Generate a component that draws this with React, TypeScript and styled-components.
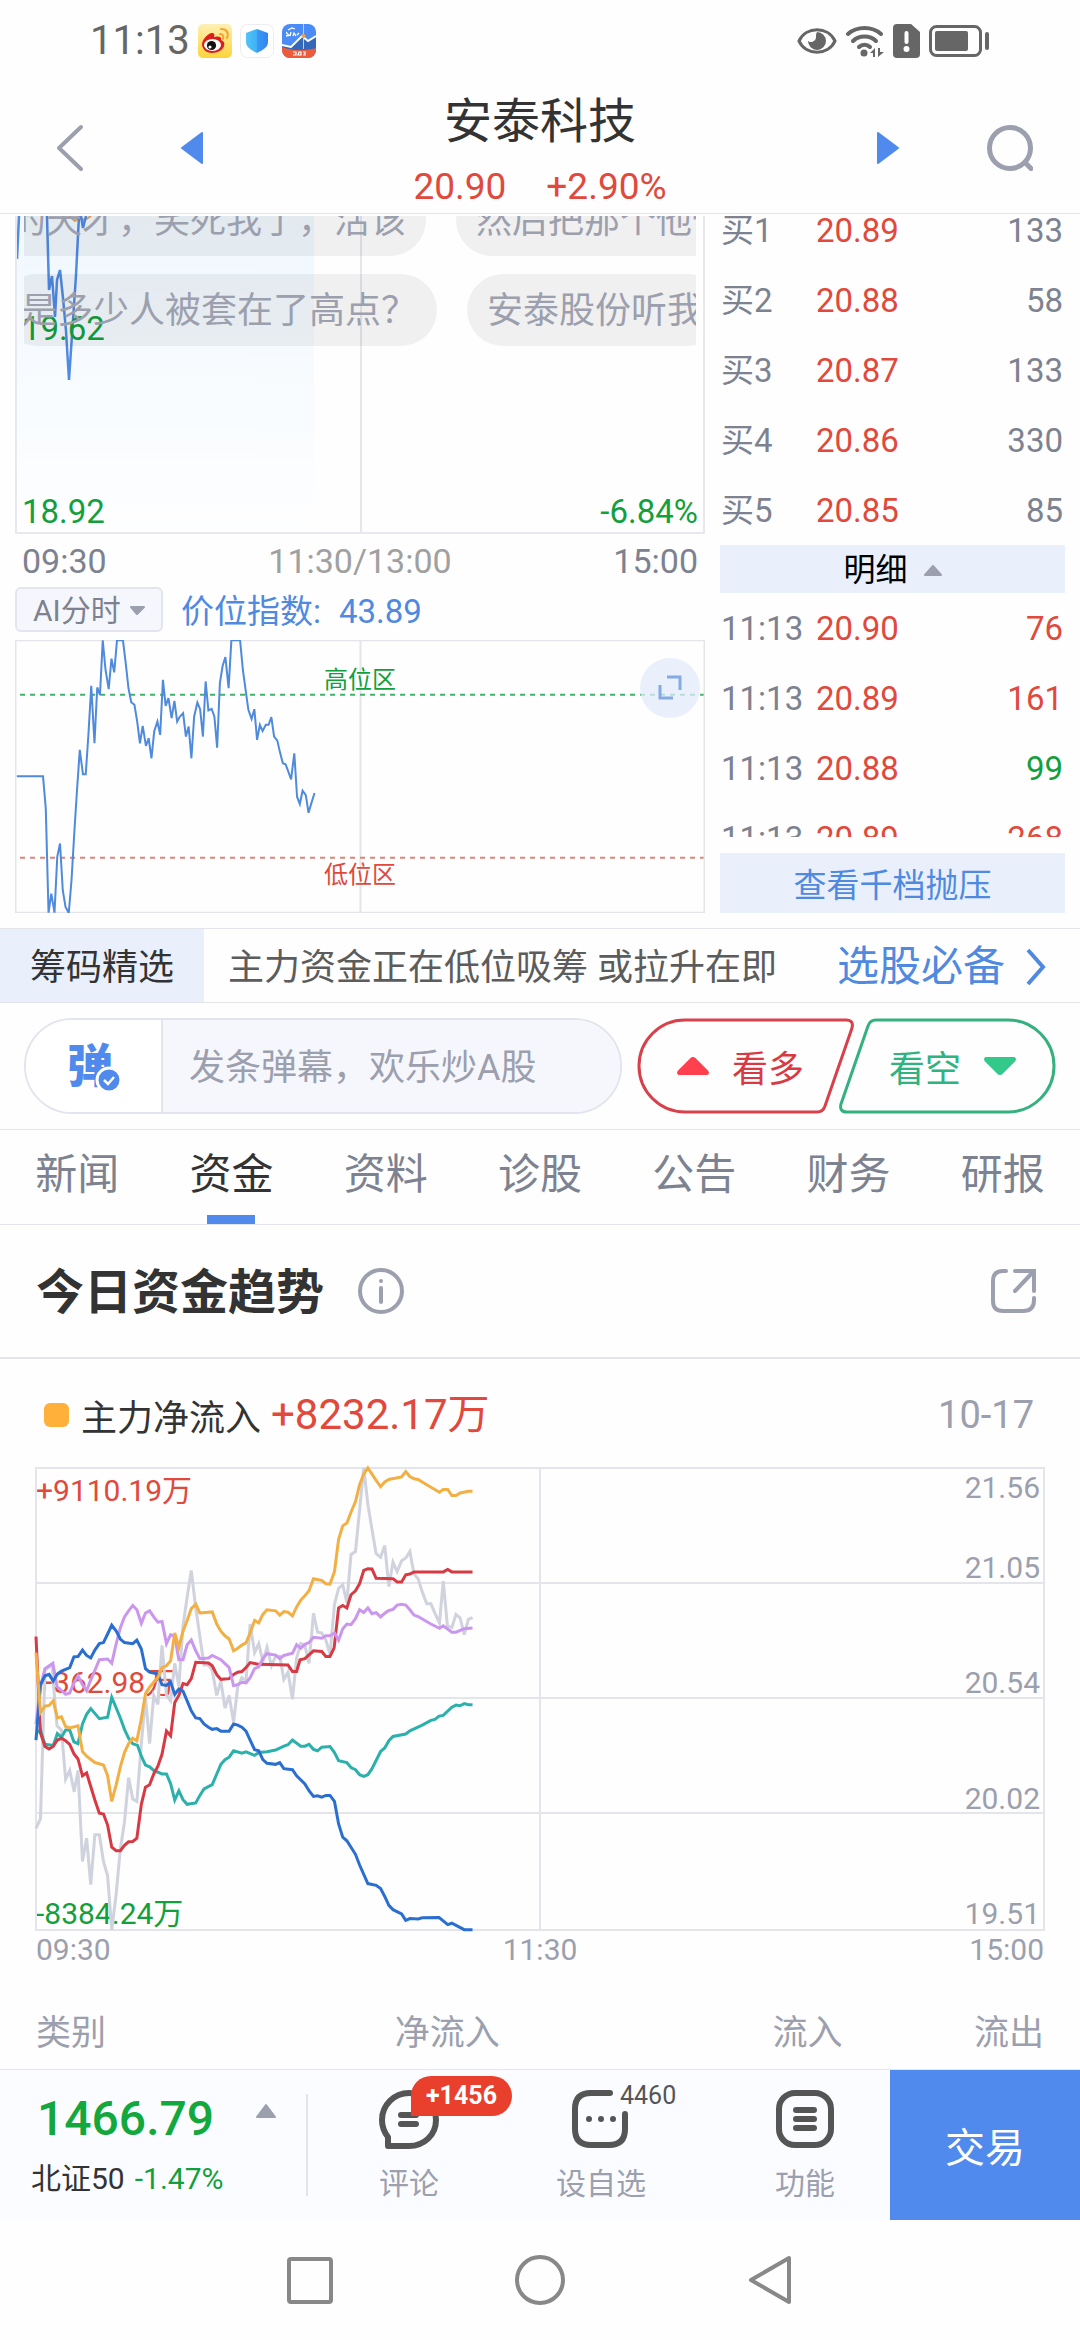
import React from 'react';
import styled, { createGlobalStyle } from 'styled-components';

const color = {
  red: '#e0493b',
  green: '#12a03c',
  blue: '#508aec',
  link: '#4f8ae0',
  ink: '#333333',
  slate: '#7d8290',
  mute: '#9c9fad',
  line: '#e4e5ea',
  pale: '#e9f0fc',
  tint: '#f6f7fc',
};

const GlobalStyle = createGlobalStyle`
  * { box-sizing: border-box; }
  body {
    margin: 0;
    background: #fefefe;
    color: ${color.ink};
    font-family: Roboto, "Noto Sans CJK SC", sans-serif;
    font-size: 36px;
  }
  button, input {
    margin: 0;
    padding: 0;
    border: 0;
    background: none;
    color: inherit;
    font: inherit;
  }
  button { cursor: pointer; }
  svg { display: block; flex: none; }
  h1, h2, p { margin: 0; }
`;

/* ---------- status bar ---------- */

const StatusBar = styled.div`
  display: flex;
  justify-content: space-between;
  align-items: center;
  height: 84px;
  padding: 0 90px 2px;
`;

const StatusGroup = styled.div<{ $gap: number }>`
  display: flex;
  align-items: center;
  gap: ${(p) => p.$gap}px;
`;

const Clock = styled.span`
  color: #666;
  font-size: 40px;
  line-height: 48px;
`;

/* ---------- header ---------- */

const Header = styled.header`
  display: grid;
  grid-template-columns: 140px 104px 1fr 104px 140px;
  align-items: center;
  height: 130px;
  margin-bottom: 2px;
  padding-bottom: 2px;
  border-bottom: 1px solid ${color.line};
`;

const IconButton = styled.button`
  display: flex;
  align-items: center;
  justify-content: center;
  height: 100%;
`;

const StockHead = styled.div`
  display: flex;
  flex-direction: column;
  align-items: center;
  gap: 11px;
  padding-top: 8px;
`;

const StockName = styled.h1`
  font-size: 48px;
  font-weight: 400;
  line-height: 60px;
`;

const StockQuote = styled.p`
  display: flex;
  gap: 40px;
  color: ${color.red};
  font-size: 37px;
  line-height: 48px;
`;

/* ---------- quote area ---------- */

const QuoteArea = styled.section`
  display: grid;
  grid-template-columns: 2fr 1fr;
  column-gap: 15px;
  padding: 0 15px 15px;
`;

const PriceChart = styled.div`
  position: relative;
  display: flex;
  flex-direction: column;
  justify-content: flex-end;
  height: 318px;
  border: 2px solid #e8e9ee;
  border-top: 0;
  overflow: hidden;
`;

const PlotLayer = styled.svg`
  position: absolute;
  inset: 0;
  width: 100%;
  height: 100%;
`;

const PriceLabels = styled.div`
  position: relative;
  display: flex;
  flex-direction: column;
  gap: 143px;
  padding: 0 5px;
  color: ${color.green};
  font-size: 33px;
  line-height: 40px;
`;

const LabelRow = styled.div`
  display: flex;
  justify-content: space-between;
`;

const Barrage = styled.div`
  position: absolute;
  top: -32px;
  left: 7px;
  right: 7px;
  display: flex;
  flex-direction: column;
  gap: 18px;
  overflow: hidden;
`;

const BarrageLane = styled.div<{ $scrolled: number }>`
  display: flex;
  gap: 30px;
  margin-left: -${(p) => p.$scrolled}px;
`;

const BarragePill = styled.span`
  flex: none;
  padding: 3px 20px 0;
  border-radius: 36px;
  background: rgba(0, 0, 0, 0.055);
  color: ${color.mute};
  font-size: 36px;
  line-height: 69px;
  white-space: nowrap;
`;

const TimeAxis = styled.div`
  display: flex;
  justify-content: space-between;
  align-items: center;
  height: 53px;
  padding: 0 7px;
  color: ${color.slate};
  font-size: 34px;
`;

const MidTime = styled.span`
  color: #a0a0a0;
`;

const IndicatorRow = styled.div`
  display: flex;
  align-items: center;
  gap: 18px;
  height: 45px;
  margin-bottom: 8px;
  color: ${color.link};
  font-size: 33px;
  line-height: 45px;
`;

const IndicatorPick = styled.button`
  display: flex;
  align-items: center;
  justify-content: space-between;
  width: 148px;
  height: 45px;
  padding: 2px 16px 0;
  border: 2px solid #e3e5ee;
  border-radius: 6px;
  background: ${color.tint};
  color: ${color.slate};
  font-size: 30px;
  line-height: 40px;
`;

const IndicatorText = styled.span`
  padding-top: 4px;
`;

const IndexChart = styled.div`
  position: relative;
  display: flex;
  flex-direction: column;
  justify-content: space-between;
  align-items: center;
  height: 273px;
  padding: 22px 0 20px;
`;

const ZoneLabel = styled.span<{ $tone: string }>`
  position: relative;
  color: ${(p) => p.$tone};
  font-size: 24px;
  line-height: 36px;
`;

const ExpandButton = styled.button`
  position: absolute;
  top: 18px;
  right: 5px;
  display: flex;
  align-items: center;
  justify-content: center;
  width: 60px;
  height: 60px;
  border-radius: 50%;
  background: rgba(226, 235, 251, 0.75);
`;

const OrderBook = styled.div`
  display: flex;
  flex-direction: column;
`;

const BidList = styled.div`
  display: flex;
  flex-direction: column;
  justify-content: flex-end;
  height: 329px;
  overflow: hidden;
`;

const TradeList = styled.div`
  height: 244px;
  margin-bottom: 16px;
  overflow: hidden;
`;

const BookRow = styled.div`
  display: grid;
  grid-template-columns: 95px 1fr auto;
  flex: none;
  height: 70px;
  padding: 2px 2px 0 1px;
  color: ${color.slate};
  font-size: 33px;
  line-height: 68px;
`;

const Figure = styled.span<{ $tone?: string }>`
  color: ${(p) => p.$tone ?? 'inherit'};
`;

const DetailToggle = styled.button`
  display: flex;
  align-items: center;
  justify-content: center;
  gap: 16px;
  height: 48px;
  padding-top: 2px;
  background: ${color.pale};
  color: #000;
  font-size: 32px;
  line-height: 46px;
`;

const DepthButton = styled.button`
  height: 60px;
  background: ${color.pale};
  color: ${color.link};
  font-size: 33px;
`;

/* ---------- promo ---------- */

const Promo = styled.a`
  display: flex;
  align-items: center;
  height: 75px;
  border-top: 1px solid ${color.line};
  border-bottom: 1px solid ${color.line};
  color: #5c5c5c;
  font-size: 36px;
  line-height: 68px;
  text-decoration: none;
`;

const PromoTag = styled.span`
  padding: 5px 30px 0;
  background: ${color.pale};
  color: ${color.ink};
`;

const PromoText = styled.span`
  flex: 1;
  padding: 5px 0 0 24px;
  white-space: pre;
`;

const PromoMore = styled.span`
  display: flex;
  align-items: center;
  gap: 20px;
  padding: 2px 33px 0 0;
  color: ${color.link};
  font-size: 42px;
`;

/* ---------- comment and vote ---------- */

const VoteBar = styled.section`
  display: flex;
  align-items: center;
  height: 127px;
  padding: 0 24px;
  border-bottom: 1px solid ${color.line};
`;

const CommentBox = styled.label`
  display: flex;
  flex: 1;
  min-width: 0;
  height: 96px;
  margin-right: 15px;
  border: 2px solid #e3e5ee;
  border-radius: 48px;
  overflow: hidden;
`;

const CommentBadge = styled.span`
  position: relative;
  width: 137px;
  padding-left: 41px;
  border-right: 2px solid #e3e5ee;
  background: #fff;
  color: ${color.blue};
  font-size: 46px;
  font-weight: 900;
  line-height: 92px;
`;

const CommentTick = styled.svg`
  position: absolute;
  left: 69px;
  top: 46px;
`;

const CommentInput = styled.input`
  flex: 1;
  min-width: 0;
  padding: 4px 26px 0;
  background: ${color.tint};
  outline: 0;
  &::placeholder { color: ${color.mute}; opacity: 1; }
`;

const VoteButton = styled.button<{ $tone: string; $overlap?: boolean }>`
  position: relative;
  display: flex;
  align-items: center;
  justify-content: center;
  gap: 22px;
  width: 218px;
  height: 96px;
  margin-left: ${(p) => (p.$overlap ? -17 : 0)}px;
  padding: ${(p) => (p.$overlap ? '0 0 0 12px' : '0 12px 0 0')};
  color: ${(p) => p.$tone};
  font-size: 36px;
`;

/* ---------- tabs ---------- */

const Tabs = styled.nav`
  display: flex;
  height: 95px;
  border-bottom: 1px solid ${color.line};
`;

const Tab = styled.button<{ $active: boolean }>`
  display: flex;
  flex: 1;
  flex-direction: column;
  align-items: center;
  justify-content: space-between;
  padding-top: 5px;
  color: ${(p) => (p.$active ? color.ink : color.slate)};
  font-size: 42px;
  line-height: 80px;
  &::after {
    content: '';
    width: 48px;
    height: 9px;
    background: ${(p) => (p.$active ? color.blue : 'transparent')};
  }
`;

/* ---------- fund trend ---------- */

const TrendHead = styled.div`
  display: flex;
  align-items: center;
  height: 134px;
  padding: 0 43px 0 36px;
  border-bottom: 2px solid ${color.line};
`;

const TrendTitle = styled.h2`
  margin-right: 34px;
  padding-top: 3px;
  font-size: 48px;
  font-weight: 700;
  line-height: 64px;
`;

const PlainButton = styled.button`
  display: flex;
`;

const Spacer = styled.span`
  flex: 1;
`;

const Legend = styled.div`
  display: flex;
  align-items: center;
  height: 109px;
  padding: 2px 46px 0 44px;
`;

const Swatch = styled.span`
  width: 25px;
  height: 24px;
  margin-right: 12px;
  border-radius: 6px;
  background: #ffb03a;
`;

const LegendValue = styled.span`
  flex: 1;
  margin-left: 10px;
  color: ${color.red};
  font-size: 42px;
  line-height: 56px;
`;

const LegendDate = styled.time`
  color: ${color.mute};
  font-size: 38px;
`;

const TrendBody = styled.div`
  padding: 0 36px;
`;

const TrendChart = styled.div`
  position: relative;
  height: 462px;
`;

const TrendLabels = styled.div`
  display: grid;
  grid-template-columns: 1fr 1fr;
  grid-template-rows: repeat(4, 1fr);
  height: 100%;
  font-size: 30px;
  line-height: 32px;
`;

const FlowLabel = styled.span<{ $tone: string; $top?: boolean }>`
  align-self: ${(p) => (p.$top ? 'start' : 'end')};
  padding-top: ${(p) => (p.$top ? 7 : 0)}px;
  color: ${(p) => p.$tone};
`;

const PriceTicks = styled.div`
  display: flex;
  flex-direction: column;
  justify-content: space-between;
  grid-column: 2;
  padding: 4px 4px 0 0;
  color: ${color.mute};
  text-align: right;
`;

const TrendAxis = styled.div`
  display: flex;
  justify-content: space-between;
  color: ${color.mute};
  font-size: 30px;
  line-height: 40px;
`;

const FlowTable = styled.table`
  width: 100%;
  margin-top: 25px;
  border-collapse: collapse;
  table-layout: fixed;
`;

const FlowHead = styled.th<{ $share: number }>`
  width: ${(p) => p.$share}%;
  height: 74px;
  padding: 0 0 5px;
  color: ${color.mute};
  font-size: 35px;
  font-weight: 400;
  text-align: right;
  &:first-child { text-align: left; }
`;

/* ---------- bottom bar ---------- */

const BottomBar = styled.footer`
  display: flex;
  height: 151px;
  border-top: 1px solid ${color.line};
  background: #fbfcff;
`;

const IndexPanel = styled.button`
  display: grid;
  grid-template-columns: 1fr auto;
  align-content: center;
  align-items: start;
  row-gap: 12px;
  width: 308px;
  margin: 24px 0;
  padding: 0 30px 0 31px;
  border-right: 2px solid #e3e4ea;
  text-align: left;
`;

const IndexValue = styled.span`
  padding-left: 6px;
  color: #12a83e;
  font-size: 48px;
  font-weight: 500;
  line-height: 56px;
`;

const IndexMark = styled.span`
  padding-top: 12px;
`;

const IndexName = styled.span`
  display: flex;
  grid-column: 1 / 3;
  gap: 10px;
  font-size: 30px;
  line-height: 40px;
`;

const ActionRow = styled.div`
  display: grid;
  grid-template-columns: 202px 182px 1fr;
  flex: 1;
`;

const Action = styled.button`
  position: relative;
  display: flex;
  flex-direction: column;
  align-items: center;
  justify-content: center;
  gap: 15px;
  padding-top: 2px;
  color: ${color.mute};
  font-size: 30px;
  line-height: 40px;
  &:last-child { padding-left: 28px; }
`;

const NewBadge = styled.span`
  position: absolute;
  top: 6px;
  left: 103px;
  height: 40px;
  padding: 0 15px;
  border-radius: 20px 20px 20px 0;
  background: #e93f2d;
  color: #fff;
  font-size: 25px;
  font-weight: 700;
  line-height: 40px;
`;

const Count = styled.span`
  position: absolute;
  top: 8px;
  left: 110px;
  color: #555;
  font-size: 25px;
  line-height: 36px;
`;

const TradeButton = styled.button`
  width: 190px;
  background: ${color.blue};
  color: #fff;
  font-size: 40px;
`;

const SystemNav = styled.nav`
  display: flex;
  align-items: center;
  justify-content: center;
  gap: 180px;
  height: 120px;
`;

/* ---------- data ---------- */

const BIDS = [
  { level: '买1', price: '20.89', volume: '133' },
  { level: '买2', price: '20.88', volume: '58' },
  { level: '买3', price: '20.87', volume: '133' },
  { level: '买4', price: '20.86', volume: '330' },
  { level: '买5', price: '20.85', volume: '85' },
];

const TRADES = [
  { time: '11:13', price: '20.90', volume: '76', tone: color.red },
  { time: '11:13', price: '20.89', volume: '161', tone: color.red },
  { time: '11:13', price: '20.88', volume: '99', tone: color.green },
  { time: '11:13', price: '20.89', volume: '268', tone: color.red },
];

const TABS = ['新闻', '资金', '资料', '诊股', '公告', '财务', '研报'];

const INDEX_LINE =
  '37,469 94,469 100,565 106,877 112,820 119,877 125,710 131,670 137,810 143,860 150,878 156,780 162,640 168,510 174,390 181,463 187,463 193,340 199,198 206,370 212,203 218,225 224,62 230,150 237,208 243,117 249,158 255,62 268,62 274,130 280,205 286,247 293,255 299,305 305,370 311,318 318,378 324,355 330,415 336,335 343,305 349,345 355,180 361,258 367,235 374,295 380,243 386,305 392,290 399,280 405,350 411,320 417,415 423,290 430,248 436,268 442,350 448,185 454,272 461,267 467,290 473,383 479,190 485,138 491,112 498,205 504,62 523,62 529,150 535,210 541,270 548,297 554,268 560,360 566,315 572,333 579,315 585,315 591,292 597,350 604,362 610,398 616,430 622,433 628,455 634,478 641,400 647,530 653,552 659,512 666,525 672,578 678,550 685,519';

const FLOW_LINES = [
  {
    stroke: '#d0d2de',
    points:
      '104,1087 117,1060 130,645 150,628 165,800 178,812 190,950 202,925 215,985 226,925 239,1180 251,1115 263,1245 275,1105 288,1105 300,1180 312,1220 324,1372 337,1270 349,1145 361,1070 373,945 385,1005 397,1012 410,850 422,720 434,850 446,715 458,740 470,575 483,715 495,730 507,625 519,690 531,520 543,440 555,365 568,470 580,550 592,630 605,630 616,645 629,715 641,675 653,750 665,715 678,790 690,690 702,665 714,675 726,515 739,595 751,570 763,620 775,580 788,632 800,605 812,605 824,670 836,650 849,725 861,610 873,570 885,575 897,625 910,485 922,538 934,540 946,560 958,600 971,460 983,415 995,405 1007,455 1019,320 1032,312 1044,195 1056,78 1068,180 1080,250 1092,318 1105,328 1117,295 1129,410 1141,342 1153,368 1166,338 1178,330 1190,312 1202,375 1214,388 1226,425 1239,458 1251,458 1263,485 1276,512 1287,395 1299,520 1312,525 1324,488 1336,498 1348,545 1360,502 1372,497',
  },
  {
    stroke: '#2bb0ac',
    points:
      '106,820 117,812 124,835 130,852 154,855 166,822 178,832 190,812 202,812 214,845 226,850 239,795 251,768 263,752 288,780 312,776 324,720 349,778 361,810 373,835 385,850 399,855 410,885 422,910 434,915 446,925 470,935 483,935 495,962 507,1008 519,982 531,1007 543,1020 568,1016 580,995 592,977 616,965 629,935 641,908 653,895 665,888 678,870 702,877 714,873 739,883 751,875 775,873 800,868 824,857 836,853 849,840 873,857 885,857 897,852 910,866 922,870 934,860 958,858 971,875 983,898 1007,903 1019,917 1032,923 1044,937 1056,942 1068,937 1080,920 1105,872 1117,862 1129,842 1141,830 1178,823 1190,814 1226,798 1251,785 1263,782 1275,773 1287,771 1312,748 1324,742 1336,744 1348,738 1360,741 1372,741',
  },
  {
    stroke: '#d83a44',
    points:
      '104,550 117,820 130,858 142,865 154,858 166,840 178,835 190,842 202,852 214,878 226,893 239,940 251,932 263,970 275,1008 288,1045 300,1047 312,1078 324,1140 337,1150 349,1150 361,1135 373,1125 385,1124 397,1115 410,1020 422,972 434,965 446,935 458,913 470,880 483,815 495,828 507,735 519,715 531,682 543,685 555,668 568,622 605,624 616,632 629,657 641,670 665,668 678,656 690,650 702,648 714,637 726,623 751,628 836,630 849,648 861,648 871,615 885,612 910,590 934,592 946,606 958,606 970,582 983,470 995,463 1007,470 1019,433 1032,422 1044,402 1056,365 1068,360 1080,361 1092,387 1141,388 1153,397 1166,397 1178,377 1190,375 1202,369 1287,369 1300,362 1312,369 1372,369',
  },
  {
    stroke: '#cb97ee',
    points:
      '104,795 117,690 130,640 153,625 165,690 190,712 202,708 214,680 226,660 239,685 251,702 263,672 275,645 288,615 312,613 324,625 337,570 349,525 361,495 373,478 385,463 397,475 410,513 422,484 434,478 446,495 458,510 470,508 483,570 495,545 507,550 519,615 531,615 543,573 555,560 568,590 580,612 605,610 616,603 641,615 665,637 678,688 690,685 702,678 714,680 726,665 739,640 751,635 763,612 775,598 800,602 812,612 824,603 849,597 861,573 873,583 885,572 897,567 910,552 934,555 946,548 958,548 971,540 983,560 995,528 1007,515 1019,517 1032,500 1044,475 1056,483 1068,470 1080,486 1092,483 1105,495 1117,485 1129,477 1141,474 1153,462 1166,460 1178,462 1190,475 1202,490 1214,494 1251,515 1276,527 1287,520 1312,538 1324,538 1348,528 1372,526',
  },
  {
    stroke: '#2a6fd0',
    points:
      '104,840 117,685 130,660 142,656 154,675 166,655 178,647 202,637 214,607 226,606 239,588 251,603 263,610 275,588 288,570 300,567 312,543 324,518 337,535 349,557 361,567 385,570 397,560 410,585 422,640 434,650 458,655 470,685 483,687 495,677 507,712 519,697 531,703 543,730 555,758 568,778 580,780 592,795 605,804 616,810 629,808 641,815 665,815 678,795 690,798 702,804 714,815 726,840 739,867 751,870 763,895 775,905 800,908 812,903 824,920 849,923 861,940 885,963 897,982 910,998 922,996 934,1000 946,995 958,995 971,1012 983,1075 995,1112 1007,1122 1032,1160 1044,1190 1068,1242 1092,1247 1105,1256 1117,1278 1129,1303 1141,1315 1166,1327 1178,1345 1190,1340 1214,1341 1226,1338 1275,1337 1300,1357 1312,1353 1348,1371 1372,1371',
  },
  {
    stroke: '#f2b044',
    points:
      '104,595 117,763 130,745 142,743 154,730 166,778 178,775 190,802 202,806 226,800 239,872 251,885 275,903 300,910 312,940 324,1012 337,965 349,915 361,875 373,850 385,835 397,842 410,780 422,710 434,692 446,678 458,665 470,637 483,632 495,618 507,540 519,580 531,535 543,505 555,472 568,460 580,484 616,481 629,515 641,535 653,548 665,557 678,590 690,583 702,574 714,568 726,540 739,505 751,512 763,488 775,475 800,478 812,490 824,480 836,482 849,492 861,467 873,448 885,436 897,422 910,388 934,393 946,402 958,403 971,368 983,278 995,240 1007,232 1019,202 1032,172 1044,125 1056,95 1068,78 1080,95 1092,113 1105,130 1117,117 1129,110 1166,103 1178,88 1190,102 1202,108 1214,110 1239,125 1276,146 1287,138 1300,138 1312,155 1324,155 1336,148 1360,143 1372,143',
  },
];

/* ---------- icons ---------- */

const WeiboIcon = () => (
  <svg width="34" height="34" viewBox="0 0 34 34">
    <defs>
      <linearGradient id="weibo" x1="0" y1="0" x2="0" y2="1">
        <stop offset="0" stopColor="#fdf0b4" />
        <stop offset="1" stopColor="#fdd43c" />
      </linearGradient>
    </defs>
    <rect width="34" height="34" rx="5" fill="url(#weibo)" />
    <path d="M4 20c0-4 6-11 10-11 2 0 3 1 2 4 3-1 8-1 7 3 3 1 4 3 3 6-1 4-6 7-12 7S4 25 4 20z" fill="#dc1f1c" />
    <ellipse cx="14.500" cy="21" rx="8.500" ry="6" fill="#fff" />
    <circle cx="13.500" cy="21.500" r="4.600" fill="#111" />
    <circle cx="12" cy="23" r="1.600" fill="#fff" />
    <path d="M22 10c3 0 4 2 3 5M23 5c6 0 8 4 6 9" fill="none" stroke="#f5a32c" strokeWidth="2" strokeLinecap="round" />
  </svg>
);

const ShieldIcon = () => (
  <svg width="34" height="34" viewBox="0 0 34 34">
    <defs>
      <linearGradient id="shield">
        <stop offset="0" stopColor="#52c4f8" />
        <stop offset="0.500" stopColor="#3fb0f6" />
        <stop offset="0.500" stopColor="#3a98f4" />
        <stop offset="1" stopColor="#2f86f0" />
      </linearGradient>
    </defs>
    <rect x="0.500" y="0.500" width="33" height="33" rx="7" fill="#fff" stroke="#ececec" />
    <path d="M17 5l11 4v9c0 5-5 8-11 11C11 26 6 23 6 18V9z" fill="url(#shield)" />
  </svg>
);

const FinanceIcon = () => (
  <svg width="34" height="34" viewBox="0 0 34 34">
    <clipPath id="finance">
      <rect width="34" height="34" rx="8" />
    </clipPath>
    <g clipPath="url(#finance)">
      <rect width="34" height="34" fill="#4a8bf5" />
      <path d="M0 22l9 2 10-11 7 5 8-6v14H0z" fill="#3568b8" />
      <path d="M0 21l9 2 11-11 6 5 8-5" fill="none" stroke="#fff" strokeWidth="2" />
      <path d="M0 23c10 4 24 4 34 1v10H0z" fill="#ec5b3a" />
      <path d="M21.500 0v25" stroke="#f0c890" strokeWidth="1" />
      <circle cx="21.500" cy="12" r="2" fill="#f2a33a" />
      <path d="M4 12l4-1M5 8c-2 2 3 2 1 4M9 8l-1 4M11 12l1-3 2 3M15 11l2-2M6 6l4-2 3 1" fill="none" stroke="#fff" strokeWidth="1.300" />
      <path d="M11 28h3v3h-3M16 31h3v-3h-2zM21 28h2v3h-2" fill="none" stroke="#fff" strokeWidth="1.200" />
    </g>
  </svg>
);

const EyeIcon = () => (
  <svg width="40" height="28" viewBox="0 0 40 28">
    <path d="M2 14C9-1 31-1 38 14 31 29 9 29 2 14z" fill="none" stroke="#666" strokeWidth="3" />
    <path d="M20 5a9 9 0 1 1-9 9c2 2 8 1 8-4 0-2 0-3 1-5z" fill="#666" />
  </svg>
);

const WifiIcon = () => (
  <svg width="38" height="33" viewBox="0 0 38 33">
    <g fill="none" stroke="#666" strokeWidth="4" strokeLinecap="round">
      <path d="M2 9c9-8 24-8 33 0" />
      <path d="M7 16c6-6 17-6 23 0" />
      <path d="M13 22c3-3 8-3 11 0" />
    </g>
    <circle cx="18" cy="28" r="3.500" fill="#666" />
    <path d="M29 23v9h-2v-4h-3zM32 32v-9h2v4h4z" fill="#666" />
  </svg>
);

const SimIcon = () => (
  <svg width="27" height="34" viewBox="0 0 27 34">
    <path d="M4 0h14l9 8v22q0 4-4 4H4q-4 0-4-4V4q0-4 4-4z" fill="#666" />
    <path d="M13.500 9v9" stroke="#fff" strokeWidth="4" strokeLinecap="round" />
    <circle cx="13.500" cy="25" r="3" fill="#fff" />
  </svg>
);

const BatteryIcon = () => (
  <svg width="61" height="32" viewBox="0 0 61 32">
    <rect x="1.500" y="1.500" width="50" height="29" rx="6" fill="none" stroke="#666" strokeWidth="3" />
    <rect x="6" y="6" width="33" height="20" rx="2" fill="#666" />
    <path d="M58 9v14" stroke="#666" strokeWidth="4" strokeLinecap="round" />
  </svg>
);

const Triangle = ({ d, width, height, fill }: { d: string; width: number; height: number; fill: string }) => (
  <svg width={width} height={height} viewBox={`0 0 ${width} ${height}`}>
    <path d={d} fill={fill} stroke={fill} strokeWidth="2" strokeLinejoin="round" />
  </svg>
);

const SearchIcon = () => (
  <svg width="46" height="46" viewBox="0 0 46 46" fill="none" stroke={color.mute} strokeWidth="5">
    <circle cx="23" cy="23" r="20.500" />
    <path d="M38 37.500l6 6" strokeLinecap="round" />
  </svg>
);

const CommentIcon = () => (
  <svg width="60" height="60" viewBox="0 0 60 60" fill="none" stroke="#555" strokeWidth="6" strokeLinecap="round" strokeLinejoin="round">
    <path d="M9 57V48C5 43 3 38 3 31a27 27 0 0 1 54 0c0 15-12 26-27 26z" />
    <path d="M22 26h15M22 35h15" />
  </svg>
);

const WatchIcon = () => (
  <svg width="60" height="60" viewBox="0 0 60 60" fill="none" stroke="#555" strokeWidth="6" strokeLinecap="round">
    <path d="M39 4H20Q4 4 4 20v20q0 16 16 16h18q16 0 16-16V25" />
    <path d="M18 30h0M30 30h0M42 30h0" />
  </svg>
);

const MenuIcon = () => (
  <svg width="60" height="60" viewBox="0 0 60 60" fill="none" stroke="#555" strokeWidth="6" strokeLinecap="round">
    <rect x="4" y="4" width="52" height="52" rx="16" />
    <path d="M21 21h18M21 30h18M21 39h18" />
  </svg>
);

/* ---------- page ---------- */

export default function App() {
  return (
    <>
      <GlobalStyle />
      <StatusBar>
        <StatusGroup $gap={8}>
          <Clock>11:13</Clock>
          <WeiboIcon />
          <ShieldIcon />
          <FinanceIcon />
        </StatusGroup>
        <StatusGroup $gap={9}>
          <EyeIcon />
          <WifiIcon />
          <SimIcon />
          <BatteryIcon />
        </StatusGroup>
      </StatusBar>

      <Header>
        <IconButton aria-label="返回">
          <svg width="28" height="48" viewBox="0 0 28 48" fill="none" stroke={color.mute} strokeWidth="4" strokeLinecap="round" strokeLinejoin="round">
            <path d="M25 3L3 24l22 21" />
          </svg>
        </IconButton>
        <IconButton aria-label="上一只">
          <Triangle d="M1 16L21 1v30z" width={22} height={32} fill={color.blue} />
        </IconButton>
        <StockHead>
          <StockName>安泰科技</StockName>
          <StockQuote>
            <span>20.90</span>
            <span>+2.90%</span>
          </StockQuote>
        </StockHead>
        <IconButton aria-label="下一只">
          <Triangle d="M21 16L1 1v30z" width={22} height={32} fill={color.blue} />
        </IconButton>
        <IconButton aria-label="搜索">
          <SearchIcon />
        </IconButton>
      </Header>

      <QuoteArea>
        <div>
          <PriceChart>
            <PlotLayer viewBox="0 0 686 316" preserveAspectRatio="none">
              <defs>
                <linearGradient id="area" x1="0" y1="0" x2="0" y2="1">
                  <stop offset="0" stopColor="#f0f8fe" />
                  <stop offset="1" stopColor="#fefeff" />
                </linearGradient>
              </defs>
              <rect width="297" height="316" fill="url(#area)" />
              <path d="M344 0v316" stroke="#e6e7ee" strokeWidth="2" />
              <path d="M52 0l6 5 4-3 6 2 6-4" fill="none" stroke="#e8a04c" strokeWidth="2" />
              <path
                d="M0 43L2 0M30 0l2 74 3-14 3 41 2-37 3-10 3 28 3 33 3 49 3-45 4-60 3-59M64 0l2 12 3-12"
                fill="none"
                stroke="#4f8ae4"
                strokeWidth="2.500"
              />
            </PlotLayer>
            <PriceLabels>
              <LabelRow>19.62</LabelRow>
              <LabelRow>
                <span>18.92</span>
                <span>-6.84%</span>
              </LabelRow>
            </PriceLabels>
            <Barrage>
              <BarrageLane $scrolled={34}>
                <BarragePill>的天才，笑死我了，活该</BarragePill>
                <BarragePill>然后把那个他们</BarragePill>
              </BarrageLane>
              <BarrageLane $scrolled={23}>
                <BarragePill>是多少人被套在了高点？</BarragePill>
                <BarragePill>安泰股份听我</BarragePill>
              </BarrageLane>
            </Barrage>
          </PriceChart>
          <TimeAxis>
            <span>09:30</span>
            <MidTime>11:30/13:00</MidTime>
            <span>15:00</span>
          </TimeAxis>
          <IndicatorRow>
            <IndicatorPick>
              AI分时
              <Triangle d="M1 1h13L7 8z" width={15} height={9} fill={color.mute} />
            </IndicatorPick>
            <IndicatorText>价位指数:</IndicatorText>
            <IndicatorText>43.89</IndicatorText>
          </IndicatorRow>
          <IndexChart>
            <PlotLayer viewBox="33 61 1502 817" preserveAspectRatio="none" fill="none">
              <g strokeWidth="2" stroke={color.line}>
                <rect x="34" y="62" width="1500" height="815" vectorEffect="non-scaling-stroke" />
                <path d="M785 61V878" vectorEffect="non-scaling-stroke" />
              </g>
              <path d="M44 225H1532" stroke="#3fb26c" strokeWidth="2" strokeDasharray="5 5" vectorEffect="non-scaling-stroke" />
              <path d="M44 713H1532" stroke="#dc8478" strokeWidth="2" strokeDasharray="5 5" vectorEffect="non-scaling-stroke" />
              <polyline points={INDEX_LINE} stroke="#4f8adc" strokeWidth="2" vectorEffect="non-scaling-stroke" />
            </PlotLayer>
            <ZoneLabel $tone={color.green}>高位区</ZoneLabel>
            <ZoneLabel $tone={color.red}>低位区</ZoneLabel>
            <ExpandButton aria-label="放大">
              <svg width="26" height="26" viewBox="0 0 26 26" fill="none" stroke="#84aae2" strokeWidth="3">
                <path d="M10 2h13v13M3 10v13h13" />
              </svg>
            </ExpandButton>
          </IndexChart>
        </div>

        <OrderBook>
          <BidList>
            {BIDS.map((bid) => (
              <BookRow key={bid.level}>
                <span>{bid.level}</span>
                <Figure $tone={color.red}>{bid.price}</Figure>
                <Figure>{bid.volume}</Figure>
              </BookRow>
            ))}
          </BidList>
          <DetailToggle>
            明细
            <Triangle d="M1 10h16L9 1z" width={18} height={11} fill={color.mute} />
          </DetailToggle>
          <TradeList>
            {TRADES.map((trade) => (
              <BookRow key={trade.volume}>
                <span>{trade.time}</span>
                <Figure $tone={color.red}>{trade.price}</Figure>
                <Figure $tone={trade.tone}>{trade.volume}</Figure>
              </BookRow>
            ))}
          </TradeList>
          <DepthButton>查看千档抛压</DepthButton>
        </OrderBook>
      </QuoteArea>

      <Promo href="#picks">
        <PromoTag>筹码精选</PromoTag>
        <PromoText>主力资金正在低位吸筹 或拉升在即</PromoText>
        <PromoMore>
          选股必备
          <svg width="22" height="38" viewBox="0 0 22 38" fill="none" stroke={color.link} strokeWidth="4">
            <path d="M3 2l15 17L3 36" />
          </svg>
        </PromoMore>
      </Promo>

      <VoteBar>
        <CommentBox>
          <CommentBadge>
            弹
            <CommentTick width="28" height="28" viewBox="0 0 28 28">
              <circle cx="14" cy="14" r="12" fill={color.blue} stroke="#fff" strokeWidth="3" />
              <path d="M9 14l4 4 6-7" fill="none" stroke="#fff" strokeWidth="2.500" />
            </CommentTick>
          </CommentBadge>
          <CommentInput placeholder="发条弹幕，欢乐炒A股" />
        </CommentBox>
        <VoteButton $tone="#d83a44">
          <PlotLayer viewBox="0 0 218 96" fill="none" stroke="#d7414b" strokeWidth="3">
            <path d="M48 2H209q8 0 6 8L188 88q-2 6-8 6H48a46 46 0 0 1 0-92z" />
          </PlotLayer>
          <Triangle d="M3 18Q1 17 3 15L15 3q2-2 4 0L31 15q2 2 0 3z" width={34} height={20} fill="#ff404e" />
          看多
        </VoteButton>
        <VoteButton $tone="#2fb37f" $overlap>
          <PlotLayer viewBox="0 0 218 96" fill="none" stroke="#35b07f" strokeWidth="3">
            <path d="M170 2H38q-6 0-8 6L3 86q-2 8 6 8H170a46 46 0 0 0 0-92z" />
          </PlotLayer>
          看空
          <Triangle d="M3 2Q1 3 3 5L15 17q2 2 4 0L31 5q2-2 0-3z" width={34} height={20} fill="#33c98a" />
        </VoteButton>
      </VoteBar>

      <Tabs>
        {TABS.map((tab) => (
          <Tab key={tab} $active={tab === '资金'}>
            {tab}
          </Tab>
        ))}
      </Tabs>

      <section>
        <TrendHead>
          <TrendTitle>今日资金趋势</TrendTitle>
          <PlainButton aria-label="说明">
            <svg width="46" height="46" viewBox="0 0 46 46" fill="none" stroke={color.mute} strokeWidth="4" strokeLinecap="round">
              <circle cx="23" cy="23" r="21" />
              <path d="M23 20v14M23 13h0" />
            </svg>
          </PlainButton>
          <Spacer />
          <PlainButton aria-label="分享">
            <svg width="48" height="46" viewBox="0 0 48 46" fill="none" stroke={color.mute} strokeWidth="4" strokeLinecap="round">
              <path d="M17 3h-3Q4 3 4 13v20q0 10 10 10h20q11 0 11-11v-2" />
              <path d="M26 3h19v20M44 4L26 23" />
            </svg>
          </PlainButton>
        </TrendHead>
        <Legend>
          <Swatch />
          主力净流入
          <LegendValue>+8232.17万</LegendValue>
          <LegendDate>10-17</LegendDate>
        </Legend>
        <TrendBody>
          <TrendChart>
            <TrendLabels>
              <FlowLabel $tone={color.red} $top>+9110.19万</FlowLabel>
              <PriceTicks>
                <span>21.56</span>
                <span>21.05</span>
              </PriceTicks>
              <FlowLabel $tone={color.red}>+362.98万</FlowLabel>
              <PriceTicks>
                <span />
                <span>20.54</span>
              </PriceTicks>
              <span />
              <PriceTicks>
                <span />
                <span>20.02</span>
              </PriceTicks>
              <FlowLabel $tone={color.green}>-8384.24万</FlowLabel>
              <PriceTicks>
                <span />
                <span>19.51</span>
              </PriceTicks>
            </TrendLabels>
            <PlotLayer viewBox="104 78 2928 1294" preserveAspectRatio="none" fill="none" overflow="visible">
              <g stroke={color.line} strokeWidth="2">
                <rect x="104" y="78" width="2928" height="1294" vectorEffect="non-scaling-stroke" />
                <path d="M104 400H3032M104 722H3032M104 1044H3032M1568 78V1372" vectorEffect="non-scaling-stroke" />
              </g>
              {FLOW_LINES.map((line) => (
                <polyline
                  key={line.stroke}
                  points={line.points}
                  stroke={line.stroke}
                  strokeWidth="3"
                  vectorEffect="non-scaling-stroke"
                />
              ))}
            </PlotLayer>
          </TrendChart>
          <TrendAxis>
            <span>09:30</span>
            <span>11:30</span>
            <span>15:00</span>
          </TrendAxis>
          <FlowTable>
            <thead>
              <tr>
                <FlowHead $share={20}>类别</FlowHead>
                <FlowHead $share={26}>净流入</FlowHead>
                <FlowHead $share={34}>流入</FlowHead>
                <FlowHead $share={20}>流出</FlowHead>
              </tr>
            </thead>
          </FlowTable>
        </TrendBody>
      </section>

      <BottomBar>
        <IndexPanel>
          <IndexValue>1466.79</IndexValue>
          <IndexMark>
            <Triangle d="M1 14h18L10 2z" width={20} height={15} fill={color.mute} />
          </IndexMark>
          <IndexName>
            北证50
            <Figure $tone={color.green}>-1.47%</Figure>
          </IndexName>
        </IndexPanel>
        <ActionRow>
          <Action>
            <CommentIcon />
            评论
            <NewBadge>+1456</NewBadge>
          </Action>
          <Action>
            <WatchIcon />
            设自选
            <Count>4460</Count>
          </Action>
          <Action>
            <MenuIcon />
            功能
          </Action>
        </ActionRow>
        <TradeButton>交易</TradeButton>
      </BottomBar>

      <SystemNav>
        <PlainButton aria-label="最近任务">
          <svg width="48" height="52" viewBox="0 0 48 52" fill="none" stroke="#888" strokeWidth="4">
            <rect x="3" y="5" width="42" height="43" rx="2" />
          </svg>
        </PlainButton>
        <PlainButton aria-label="主页">
          <svg width="52" height="52" viewBox="0 0 52 52" fill="none" stroke="#888" strokeWidth="4">
            <circle cx="26" cy="26" r="23" />
          </svg>
        </PlainButton>
        <PlainButton aria-label="后退">
          <svg width="48" height="52" viewBox="0 0 48 52" fill="none" stroke="#888" strokeWidth="4" strokeLinejoin="round">
            <path d="M43 4v44L5 26z" />
          </svg>
        </PlainButton>
      </SystemNav>
    </>
  );
}
